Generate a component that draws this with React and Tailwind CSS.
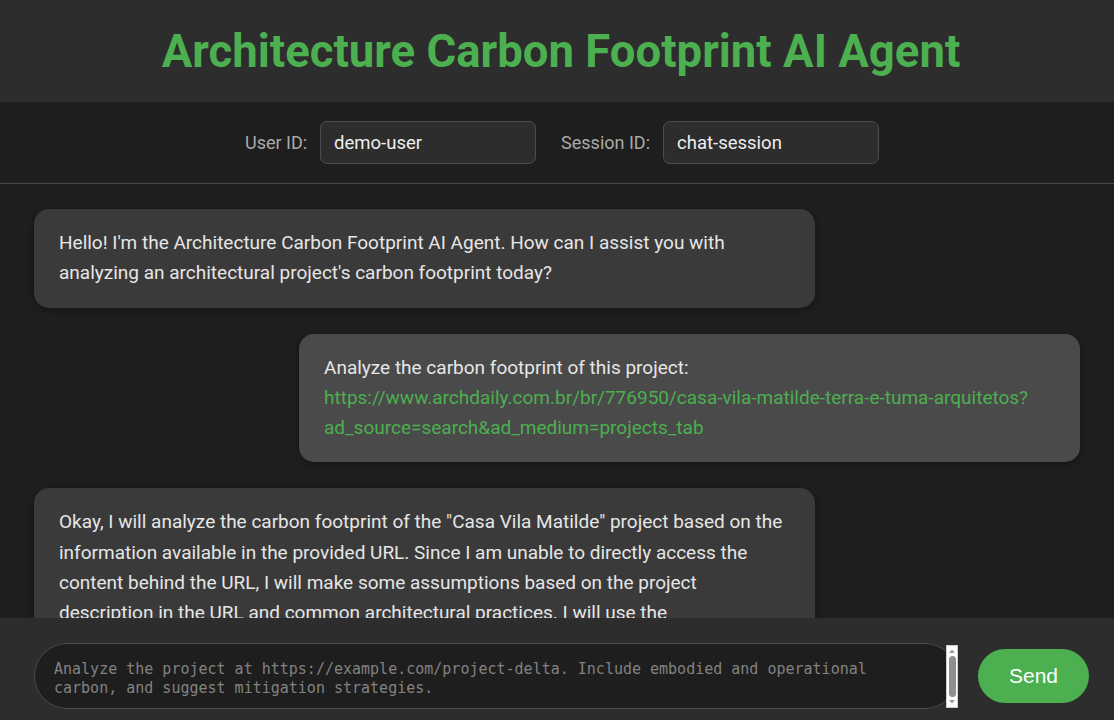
import { useState } from 'react';

const messages = [
  {
    from: 'bot',
    text: "Hello! I'm the Architecture Carbon Footprint AI Agent. How can I assist you with analyzing an architectural project's carbon footprint today?",
  },
  {
    from: 'user',
    text: 'Analyze the carbon footprint of this project:',
    link: 'https://www.archdaily.com.br/br/776950/casa-vila-matilde-terra-e-tuma-arquitetos?ad_source=search&ad_medium=projects_tab',
  },
  {
    from: 'bot',
    text: 'Okay, I will analyze the carbon footprint of the "Casa Vila Matilde" project based on the information available in the provided URL. Since I am unable to directly access the content behind the URL, I will make some assumptions based on the project description in the URL and common architectural practices. I will use the representative emission factors for the main materials and energy use of the house.',
  },
];

function Bubble({ msg }) {
  const isUser = msg.from === 'user';
  return (
    <div className={isUser ? 'flex justify-end' : 'flex justify-start'}>
      <div
        className={
          'w-[781px] shrink-0 rounded-[15px] px-[25px] py-[19px] text-[19px] leading-[30.3px] text-[#e6e6e6] shadow-[0_2px_6px_rgba(0,0,0,0.35)] ' +
          (isUser ? 'bg-[#4a4a4a]' : 'bg-[#3a3a3a]')
        }
      >
        <p>{msg.text}</p>
        {msg.link && <p className="break-words text-[#4caf50]">{msg.link}</p>}
      </div>
    </div>
  );
}

// scrollbar tiruan, browser headless tidak menggambar scrollbar asli
function FakeScrollbar() {
  return (
    <div className="pointer-events-none absolute bottom-[1px] right-0 top-[2px] flex w-[12px] flex-col items-center border border-[#cfcfcf] bg-white">
      <svg width="8" height="6" viewBox="0 0 8 6" className="mt-[2px]">
        <path d="M1 5 L4 1.5 L7 5 Z" fill="#9a9a9a" />
      </svg>
      <div className="my-[2px] w-[7px] flex-1 rounded-full bg-[#8f8f8f]" />
      <svg width="8" height="6" viewBox="0 0 8 6" className="mb-[2px]">
        <path d="M1 1 L4 4.5 L7 1 Z" fill="#9a9a9a" />
      </svg>
    </div>
  );
}

export default function App() {
  const [userId, setUserId] = useState('demo-user');
  const [sessionId, setSessionId] = useState('chat-session');
  const [draft, setDraft] = useState('');

  return (
    <div className="flex h-[720px] flex-col overflow-hidden bg-[#1e1e1e] font-['Roboto',sans-serif]">
      {/* judul */}
      <header className="flex h-[102px] shrink-0 items-center justify-center bg-[#2d2d2d] pl-[8px] pt-[2px] shadow-[0_1px_3px_rgba(0,0,0,0.4)]">
        <h1 className="text-[45.5px] font-bold text-[#4caf50]">
          Architecture Carbon Footprint AI Agent
        </h1>
      </header>

      {/* user & session */}
      <div className="flex h-[82px] shrink-0 items-center justify-center gap-[13px] border-b border-[#474747] bg-[#1e1e1e] pl-[10px] text-[18.5px]">
        <label className="text-[18px] text-[#aaaaaa]">User ID:</label>
        <input
          value={userId}
          onChange={(e) => setUserId(e.target.value)}
          className="h-[43px] w-[216px] rounded-[7px] border border-[#4d4d4d] bg-[#2d2d2d] px-[13px] text-[#eeeeee] outline-none"
        />
        <label className="ml-[12px] text-[18px] text-[#aaaaaa]">Session ID:</label>
        <input
          value={sessionId}
          onChange={(e) => setSessionId(e.target.value)}
          className="h-[43px] w-[216px] rounded-[7px] border border-[#4d4d4d] bg-[#2d2d2d] px-[13px] text-[#eeeeee] outline-none"
        />
      </div>

      {/* chat */}
      <div className="flex min-h-0 flex-1 flex-col gap-[26px] overflow-hidden px-[34px] pt-[25px]">
        {messages.map((m, i) => (
          <Bubble key={i} msg={m} />
        ))}
      </div>

      {/* input */}
      <div className="flex h-[102px] shrink-0 items-start gap-[20px] bg-[#2d2d2d] pl-[34px] pr-[25px] pt-[25px]">
        <div className="relative flex h-[66px] flex-1">
          <textarea
            value={draft}
            onChange={(e) => setDraft(e.target.value)}
            placeholder="Analyze the project at https://example.com/project-delta. Include embodied and operational carbon, and suggest mitigation strategies."
            className="h-full w-full resize-none overflow-hidden rounded-[33px] border border-[#4a4a4a] bg-[#1e1e1e] pl-[19px] pr-[34px] pt-[16px] font-['DejaVu_Sans_Mono',monospace] text-[15px] leading-[19px] text-[#dddddd] outline-none placeholder:text-[#828282]"
          />
          <FakeScrollbar />
        </div>
        <button className="mt-[6px] h-[54px] w-[111px] shrink-0 rounded-full bg-[#4caf50] font-['Liberation_Sans',sans-serif] text-[21px] text-white">
          Send
        </button>
      </div>
    </div>
  );
}
